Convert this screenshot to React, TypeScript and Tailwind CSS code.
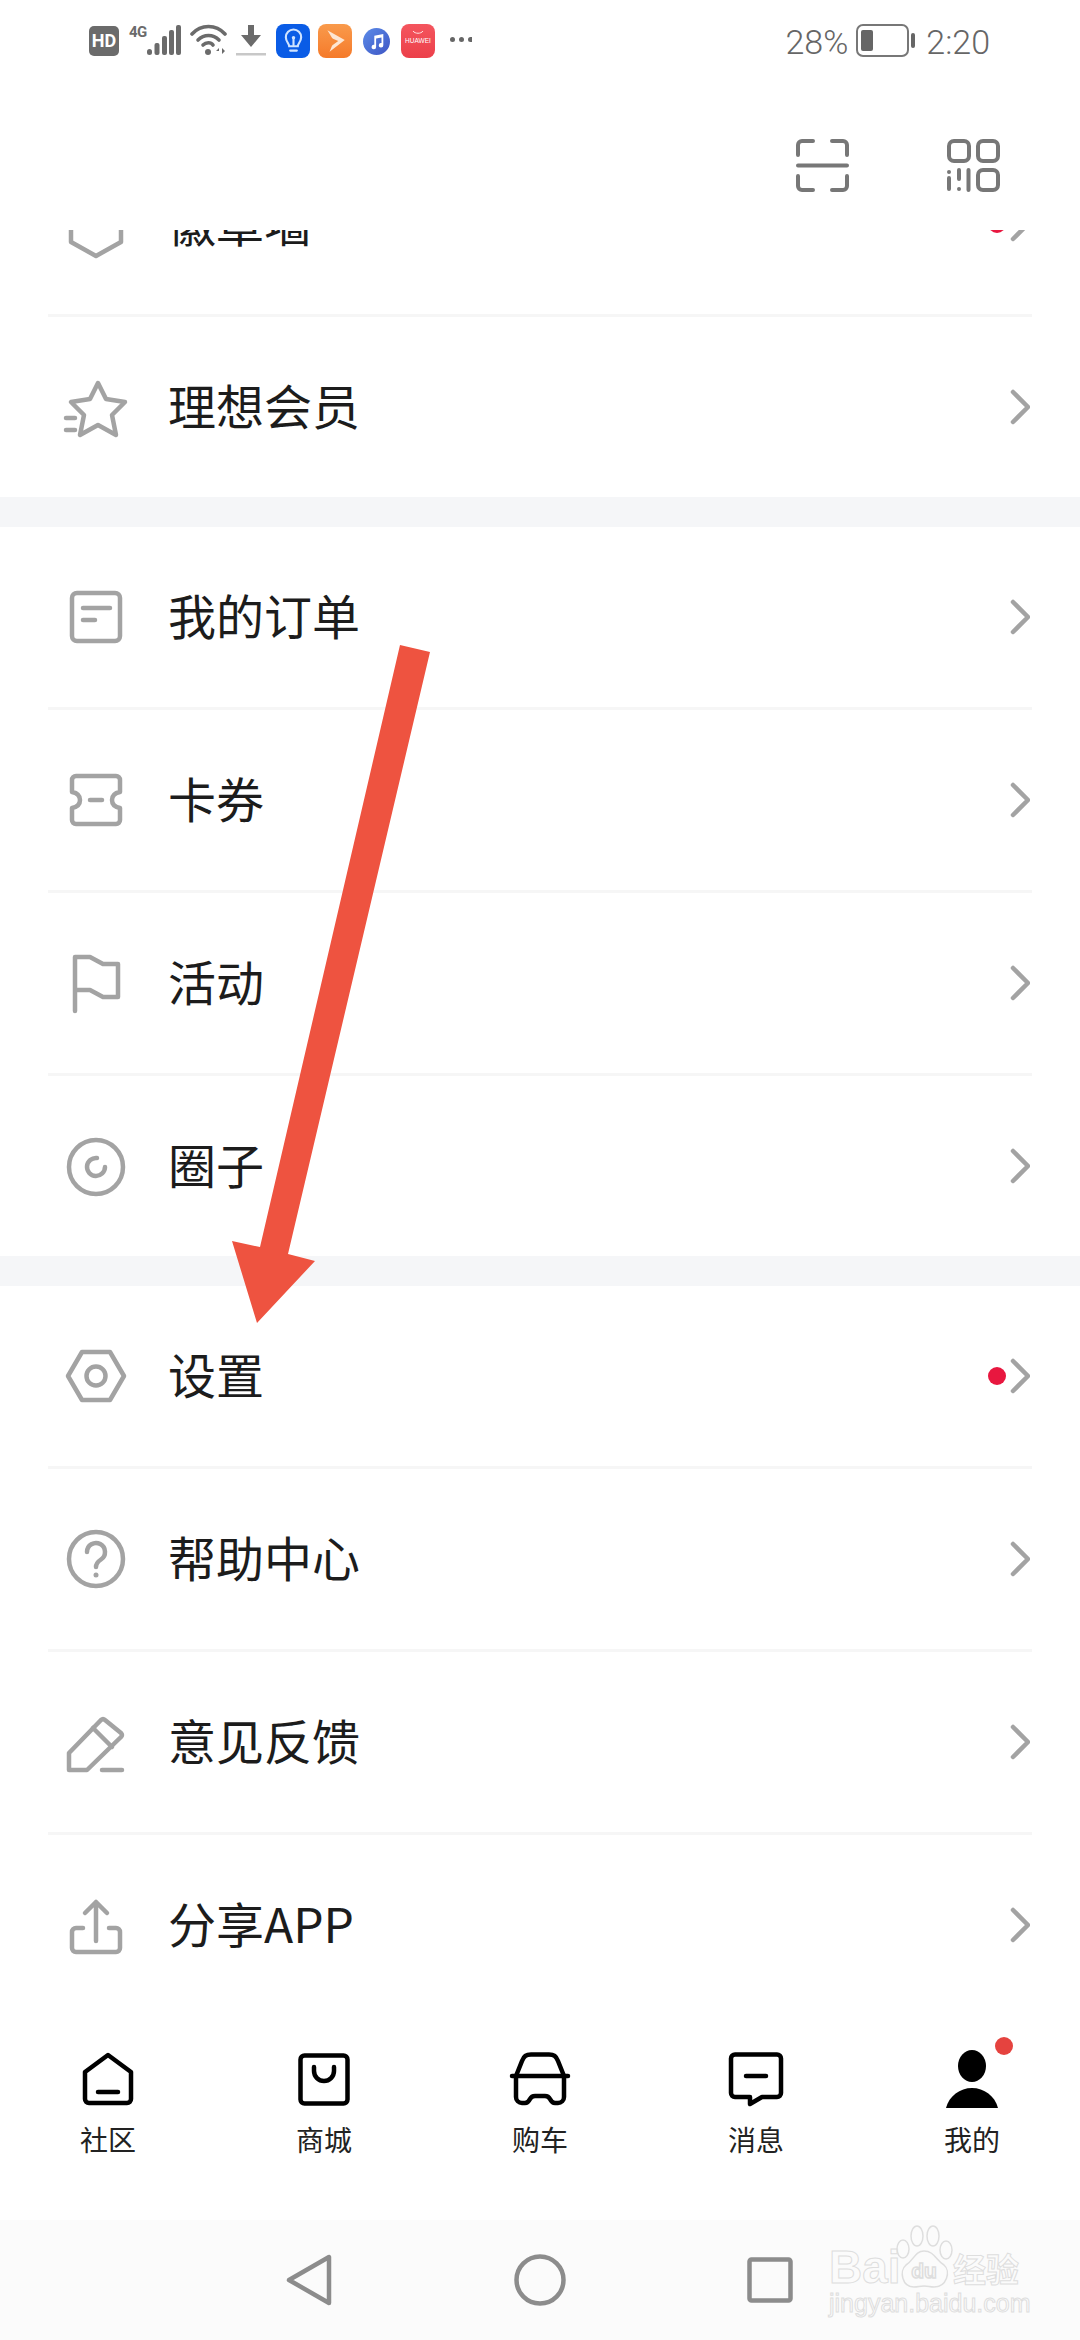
import React from 'react';

const cjk = "font-['Noto_Sans_CJK_SC','Noto_Sans',sans-serif]";

const MenuIcon: React.FC<{ children: React.ReactNode }> = ({ children }) => (
  <svg
    viewBox="0 0 64 64"
    className="h-16 w-16 shrink-0 overflow-visible text-[#a3a3a3]"
    fill="none"
    stroke="currentColor"
    strokeWidth={4.5}
    strokeLinecap="round"
    strokeLinejoin="round"
  >
    {children}
  </svg>
);

const TabIcon: React.FC<{ children: React.ReactNode }> = ({ children }) => (
  <svg
    viewBox="0 0 60 60"
    className="h-[60px] w-[60px] overflow-visible text-black"
    fill="none"
    stroke="currentColor"
    strokeWidth={4.5}
    strokeLinecap="round"
    strokeLinejoin="round"
  >
    {children}
  </svg>
);

const Chevron = () => (
  <svg viewBox="0 0 20 36" className="h-9 w-5 text-[#a3a3a3]" fill="none" stroke="currentColor" strokeWidth={4.5} strokeLinecap="round" strokeLinejoin="round">
    <path d="M3 3l15 15L3 33" />
  </svg>
);

const Row: React.FC<{ icon: React.ReactNode; label: string; dot?: boolean; last?: boolean }> = ({ icon, label, dot, last }) => (
  <>
    <div className="flex h-[180px] items-center pl-[64px] pr-[50px]">
      {icon}
      <span className={`ml-[40px] flex-1 pb-[6px] text-[48px] leading-none text-[#1c1c1c] ${cjk}`}>{label}</span>
      {dot && <span className="mr-1 h-[18px] w-[18px] rounded-full bg-[#e8173f]" />}
      <Chevron />
    </div>
    {!last && <div className="mx-[48px] h-[3px] bg-[#f6f6f6]" />}
  </>
);

const GroupGap = () => <div className="h-[30px] bg-[#f5f6f8]" />;

const StatusBar = () => (
  <div className="flex h-[82px] items-start pl-[89px] pr-[90px] pt-[24px] text-[#666]">
    <div className="mt-[2px] flex h-[30px] w-[30px] items-center justify-center rounded-[5px] bg-[#6b6b6b] font-['Roboto',sans-serif] text-[18px] font-bold leading-none text-white">
      HD
    </div>
    <span className="ml-[10px] mt-[0px] w-[18px] font-['Roboto',sans-serif] text-[15px] font-bold leading-[16px] tracking-[-0.5px] text-[#6b6b6b]">4G</span>
    <svg viewBox="0 0 34 30" className="mt-[1px] h-[30px] w-[34px]" fill="#6b6b6b">
      <rect x="0" y="24" width="5" height="6" rx="2.5" />
      <rect x="7.5" y="18" width="5" height="12" rx="2" />
      <rect x="15" y="11" width="5" height="19" rx="2" />
      <rect x="22" y="5" width="5" height="25" rx="2" />
      <rect x="29" y="0" width="5" height="30" rx="2" />
    </svg>
    <svg viewBox="0 0 37 31" className="ml-[9px] h-[31px] w-[37px]" fill="none" stroke="#6b6b6b" strokeWidth={3.6} strokeLinecap="round">
      <path d="M2 10C11 0 26 0 35 10" />
      <path d="M8 16c6-6 15-6 21 0" />
      <path d="M13 21c3-3 8-3 10 0" />
      <circle cx="18" cy="28" r="3" fill="#6b6b6b" stroke="none" />
      <path d="M29 24l-3 3h3v-3zM32 24v6l3-3-3-3z" fill="#6b6b6b" stroke="none" />
    </svg>
    <svg viewBox="0 0 30 32" className="ml-[9px] h-[32px] w-[30px]">
      <path d="M12 1h6v10h7L15 23 5 11h7z" fill="#6b6b6b" />
      <rect x="0" y="29" width="30" height="2.5" fill="#c8c8c8" />
    </svg>
    <div className="ml-[10px] flex h-[34px] w-[34px] items-center justify-center rounded-[8px] bg-[#0a5ce6]">
      <svg viewBox="0 0 24 28" className="h-[27px] w-[23px]" fill="none" stroke="#cfe3ff" strokeWidth={2.2} strokeLinecap="round">
        <path d="M7.500 19c0-3-3.500-5-3.500-9.500a8 8 0 0 1 16 0c0 4.500-3.500 6.500-3.500 9.500z" />
        <path d="M8.500 23.500h7M12 12v6" />
        <circle cx="12" cy="10" r="1.800" fill="#cfe3ff" stroke="none" />
      </svg>
    </div>
    <div className="ml-[8px] flex h-[34px] w-[34px] items-center justify-center rounded-[8px] bg-gradient-to-b from-[#f99a4b] to-[#f57a29]">
      <svg viewBox="0 0 24 24" className="h-[26px] w-[26px]">
        <path d="M5 2l16 9-14 11 4-10z" fill="#fde6d2" />
        <path d="M8 9l7 3-7 5z" fill="#f58a3a" />
      </svg>
    </div>
    <div className="ml-[11px] mt-[4px] flex h-[27px] w-[27px] items-center justify-center rounded-full bg-gradient-to-br from-[#5b8be8] to-[#3f55c4]">
      <svg viewBox="0 0 20 20" className="h-[18px] w-[18px]" fill="#fff">
        <path d="M7 3l10-2v12.500a2.500 2.500 0 1 1-2-2.400V5L9 6.200v9.300a2.500 2.500 0 1 1-2-2.400z" />
      </svg>
    </div>
    <div className="ml-[11px] relative flex h-[34px] w-[34px] flex-col items-center rounded-[8px] bg-gradient-to-b from-[#f4555e] to-[#ec3f4a]">
      <svg viewBox="0 0 12 5" className="mt-[6px] h-[5px] w-[12px]" fill="none" stroke="#ffe3e3" strokeWidth={1}>
        <path d="M1 1c2 3 8 3 10 0" />
      </svg>
      <span className="mt-[2px] font-['Liberation_Sans',sans-serif] text-[6.500px] leading-[8px] text-white">HUAWEI</span>
    </div>
    <div className="ml-[15px] mt-[13px] flex w-[22px] gap-[4px]">
      <span className="h-[5px] w-[5px] rounded-full bg-[#666]" />
      <span className="h-[5px] w-[5px] rounded-full bg-[#666]" />
      <span className="h-[5px] w-[4px] rounded-l-full bg-[#666]" />
    </div>
    <div className="flex-1" />
    <span className="mt-[-2px] font-['Roboto',sans-serif] text-[34px] font-light leading-[40px]">28%</span>
    <svg viewBox="0 0 60 33" className="ml-[8px] h-[33px] w-[60px]" fill="none">
      <rect x="1" y="1" width="51" height="31" rx="6" stroke="#777" strokeWidth={2} />
      <rect x="5" y="6" width="12" height="21" rx="2" fill="#666" />
      <rect x="55" y="9" width="4" height="15" rx="2" fill="#666" />
    </svg>
    <span className="ml-[10px] mt-[-2px] font-['Roboto',sans-serif] text-[34px] font-light leading-[40px]">2:20</span>
  </div>
);

const HeaderBar = () => (
  <div className="flex justify-end gap-[98px] pr-[80px] pt-[57px]">
    <svg viewBox="0 0 53 53" className="h-[53px] w-[53px]" fill="none" stroke="#777" strokeWidth={4} strokeLinecap="round" strokeLinejoin="round">
      <path d="M2 16V6a4 4 0 0 1 4-4h11M36 2h11a4 4 0 0 1 4 4v10M2 37v10a4 4 0 0 0 4 4h11M36 51h11a4 4 0 0 0 4-4V37M2 26.500h49" />
    </svg>
    <svg viewBox="0 0 53 53" className="h-[53px] w-[53px]" fill="none" stroke="#777" strokeWidth={4} strokeLinecap="round">
      <rect x="2" y="2" width="20" height="20" rx="5" />
      <rect x="31" y="2" width="20" height="20" rx="5" />
      <rect x="31" y="31" width="20" height="20" rx="5" />
      <path d="M2 39v11M12 31v9M21.500 31v20M2 33v.1M12 50v.1" />
    </svg>
  </div>
);

const tabs: { label: string; icon: React.ReactNode; badge?: boolean }[] = [
  {
    label: '社区',
    icon: (
      <TabIcon>
        <path d="M30 6l23 17v27a4 4 0 0 1-4 4H11a4 4 0 0 1-4-4V23z" />
        <path d="M20 43h20" />
      </TabIcon>
    ),
  },
  {
    label: '商城',
    icon: (
      <TabIcon>
        <rect x="6.500" y="6.500" width="47" height="48" rx="4" />
        <path d="M20 18v4a10 10 0 0 0 20 0v-4" />
      </TabIcon>
    ),
  },
  {
    label: '购车',
    icon: (
      <TabIcon>
        <path d="M2 27h56" />
        <path d="M6 27l6-15c2-5 4-6.500 9-6.500h18c5 0 7 1.500 9 6.500l6 15" />
        <path d="M6 27v21a6 6 0 0 0 6 6h3c3 0 4-2 5-4s3-3 5-3h10c2 0 4 1 5 3s2 4 5 4h3a6 6 0 0 0 6-6V27" />
      </TabIcon>
    ),
  },
  {
    label: '消息',
    icon: (
      <TabIcon>
        <path d="M9 5.500h42a4 4 0 0 1 4 4V44a4 4 0 0 1-4 4H36l-12 7v-7H9a4 4 0 0 1-4-4V9.500a4 4 0 0 1 4-4z" />
        <path d="M20 27h20" />
      </TabIcon>
    ),
  },
  {
    label: '我的',
    badge: true,
    icon: (
      <TabIcon>
        <ellipse cx="30" cy="17" rx="14" ry="16" fill="currentColor" stroke="none" />
        <path d="M4 59c3-12 14-20 26-20s23 8 26 20z" fill="currentColor" stroke="none" />
      </TabIcon>
    ),
  },
];

const TabBar = () => (
  <div className="grid h-[200px] grid-cols-5 bg-white pt-[29px]">
    {tabs.map((tab) => (
      <div key={tab.label} className="relative flex flex-col items-center">
        {tab.icon}
        {tab.badge && <span className="absolute left-[131px] top-[-12px] h-[18px] w-[18px] rounded-full bg-[#e5433f]" />}
        <span className={`mt-[12px] text-[28px] leading-[36px] text-[#222] ${cjk}`}>{tab.label}</span>
      </div>
    ))}
  </div>
);

const SystemNav = () => (
  <div className="flex h-[120px] items-center bg-[#fbfbfb] pl-[286px] text-[#8c8c8c]">
    <svg viewBox="0 0 46 52" className="h-[52px] w-[46px]" fill="none" stroke="currentColor" strokeWidth={4.500} strokeLinejoin="round">
      <path d="M43 3v46L3 26z" />
    </svg>
    <svg viewBox="0 0 52 52" className="ml-[182px] h-[52px] w-[52px]" fill="none" stroke="currentColor" strokeWidth={4.500}>
      <circle cx="26" cy="26" r="23.500" />
    </svg>
    <svg viewBox="0 0 46 46" className="ml-[181px] h-[46px] w-[46px]" fill="none" stroke="currentColor" strokeWidth={4.500} strokeLinejoin="round">
      <rect x="2.500" y="2.500" width="41" height="41" rx="2" />
    </svg>
  </div>
);

const Watermark = () => (
  <div className="absolute left-[829px] top-[2225px] h-[92px] w-[195px] text-transparent [-webkit-text-stroke:1px_#dedede]">
    <span className="absolute left-0 top-[18px] font-['Liberation_Sans',sans-serif] text-[46px] font-bold leading-[48px]">Bai</span>
    <svg viewBox="0 0 58 64" className="absolute left-[66px] top-0 h-[64px] w-[58px]" fill="none" stroke="#dedede" strokeWidth={1.500}>
      <ellipse cx="8" cy="24" rx="6" ry="9" />
      <ellipse cx="22" cy="11" rx="6" ry="10" />
      <ellipse cx="38" cy="11" rx="6" ry="10" />
      <ellipse cx="51" cy="25" rx="6" ry="9" />
      <path d="M29 26c10 0 12 9 20 14 7 6 3 22-10 22-4 0-6-1-10-1s-6 1-10 1C7 62 4 46 11 40c8-5 9-14 18-14z" />
      <text x="29" y="53" textAnchor="middle" fontSize="21" fontWeight="700" fontFamily="Liberation Sans, sans-serif" fill="none">du</text>
    </svg>
    <span className={`absolute left-[124px] top-[23px] text-[33px] font-bold leading-[40px] ${cjk}`}>经验</span>
    <span className="absolute left-0 top-[64px] font-['Liberation_Sans',sans-serif] text-[25px] leading-[28px]">jingyan.baidu.com</span>
  </div>
);

export default function App() {
  return (
    <div className="relative h-[2340px] w-[1080px] overflow-hidden bg-white">
      <div className="h-[230px]">
        <StatusBar />
        <HeaderBar />
      </div>

      <div className="h-[1790px] overflow-hidden">
        <div className="mt-[-96px]">
          <Row
            label="徽章墙"
            dot
            icon={
              <MenuIcon>
                <path d="M32 -2L57 13V50L32 64L7 50V13Z" />
              </MenuIcon>
            }
          />
          <Row
            label="理想会员"
            last
            icon={
              <MenuIcon>
                <path d="M34 8l8 16 19 3-13 13 4 20-18-10-18 10 4-20L7 27l19-3z" />
                <path d="M2 43h9M2 55h9" />
              </MenuIcon>
            }
          />
          <GroupGap />
          <Row
            label="我的订单"
            icon={
              <MenuIcon>
                <rect x="8" y="8" width="48" height="48" rx="5" />
                <path d="M19 23h27M19 35h12" />
              </MenuIcon>
            }
          />
          <Row
            label="卡券"
            icon={
              <MenuIcon>
                <path d="M12 8h40a4 4 0 0 1 4 4v12c-5 1-8 4-8 8s3 7 8 8v12a4 4 0 0 1-4 4H12a4 4 0 0 1-4-4V40c5-1 8-4 8-8s-3-7-8-8V12a4 4 0 0 1 4-4z" />
                <path d="M26 32h12" />
              </MenuIcon>
            }
          />
          <Row
            label="活动"
            icon={
              <MenuIcon>
                <path d="M11 60V6h15l13 7h15v33H39l-13-7H11" />
              </MenuIcon>
            }
          />
          <Row
            label="圈子"
            last
            icon={
              <MenuIcon>
                <circle cx="32" cy="33" r="27" />
                <path d="M41 33a9 9 0 1 1-8-9" />
              </MenuIcon>
            }
          />
          <GroupGap />
          <Row
            label="设置"
            dot
            icon={
              <MenuIcon>
                <path d="M4 32L18 8h28l14 24-14 24H18z" />
                <circle cx="32" cy="32" r="9.500" />
              </MenuIcon>
            }
          />
          <Row
            label="帮助中心"
            icon={
              <MenuIcon>
                <circle cx="32" cy="32" r="27" />
                <path d="M23 25a9 9 0 1 1 14 7.500c-3 2-5 3.500-5 7.500" />
                <circle cx="32" cy="48" r="2.500" fill="currentColor" stroke="none" />
              </MenuIcon>
            }
          />
          <Row
            label="意见反馈"
            icon={
              <MenuIcon>
                <path d="M5 60V43L37 10a3 3 0 0 1 4 0l16 13a3 3 0 0 1 0 4L23 60z" />
                <path d="M29 18l19 19M38 60h20" />
              </MenuIcon>
            }
          />
          <Row
            label="分享APP"
            last
            icon={
              <MenuIcon>
                <path d="M32 48V9M21 20L32 9l11 11" />
                <path d="M19 35h-7a4 4 0 0 0-4 4v16a4 4 0 0 0 4 4h40a4 4 0 0 0 4-4V39a4 4 0 0 0-4-4h-7" />
              </MenuIcon>
            }
          />
        </div>
      </div>

      <TabBar />
      <SystemNav />

      {/* red annotation arrow drawn over the list */}
      <svg viewBox="0 0 200 690" className="absolute left-[232px] top-[640px] h-[690px] w-[200px]" fill="#ee5340">
        <path d="M168 5L198 12L56 614L83 621L25 683L0 601L28 607Z" />
      </svg>

      <Watermark />
    </div>
  );
}
